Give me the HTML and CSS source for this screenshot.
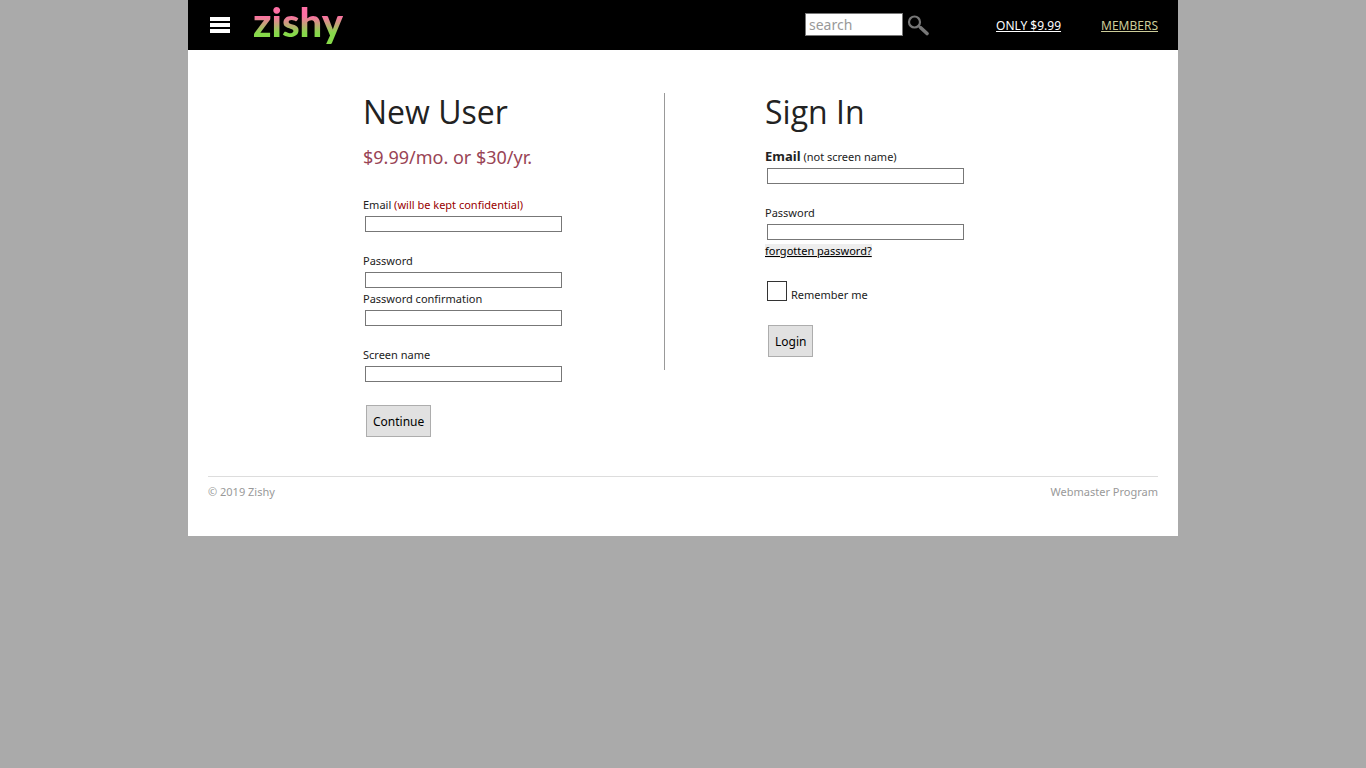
FILE: index.html
```html
<!DOCTYPE html>
<html lang="en">
<head>
<meta charset="utf-8">
<meta name="viewport" content="width=device-width, initial-scale=1">
<title>Zishy</title>
<link rel="stylesheet" href="styles.css">
</head>
<body>
<div class="page">
  <header class="topbar">
    <button class="menu" type="button" aria-label="Menu"><span></span><span></span><span></span></button>
    <a class="logo" href="#">zishy</a>
    <form class="search" role="search">
      <input class="search-box" type="text" placeholder="search" aria-label="Search">
      <button class="search-go" type="submit" aria-label="Go">
        <svg width="24" height="22" viewBox="0 0 24 22" fill="none" stroke="#777">
          <circle cx="7.500" cy="8" r="5.500" stroke-width="2.200"/>
          <path d="M11.500 12L14 14" stroke-width="2.500"/>
          <path d="M14 14L20 19.500" stroke-width="3.600" stroke-linecap="round"/>
        </svg>
      </button>
    </form>
    <nav class="links">
      <a class="price-link" href="#">ONLY $9.99</a>
      <a class="members-link" href="#">MEMBERS</a>
    </nav>
  </header>

  <main class="panels">
    <section class="panel">
      <h1>New User</h1>
      <p class="price">$9.99/mo. or $30/yr.</p>
      <form class="form">
        <div class="field">
          <label for="new-email">Email <span class="note">(will be kept confidential)</span></label>
          <input id="new-email" type="text">
        </div>
        <div class="group">
          <div class="field">
            <label for="new-pass">Password</label>
            <input id="new-pass" type="password">
          </div>
          <div class="field">
            <label for="new-confirm">Password confirmation</label>
            <input id="new-confirm" type="password">
          </div>
        </div>
        <div class="field">
          <label for="screen-name">Screen name</label>
          <input id="screen-name" type="text">
        </div>
        <button class="submit" type="submit">Continue</button>
      </form>
    </section>
    <section class="panel">
      <h1>Sign In</h1>
      <form class="form signin">
        <div class="field">
          <label for="email"><strong>Email</strong> (not screen name)</label>
          <input id="email" type="text">
        </div>
        <div class="field">
          <label for="pass">Password</label>
          <input id="pass" type="password">
          <a class="forgot" href="#">forgotten password?</a>
        </div>
        <div class="remember">
          <input id="remember" type="checkbox">
          <label for="remember">Remember me</label>
        </div>
        <button class="submit" type="submit">Login</button>
      </form>
    </section>
  </main>

  <footer class="footer">
    <span>© 2019 Zishy</span>
    <a href="#">Webmaster Program</a>
  </footer>
</div>
</body>
</html>
```
FILE: styles.css
```css
* { box-sizing: border-box; }
body {
  margin: 0;
  background: #aaa;
  color: #222;
  font: 11px/18px "Noto Sans", "Open Sans", sans-serif;
}
button, input { font-family: inherit; margin: 0; border-radius: 0; }
.page { max-width: 990px; margin: 0 auto; background: #fff; padding-bottom: 35px; }

.topbar {
  display: flex;
  align-items: center;
  height: 50px;
  padding: 0 20px;
  background: #000;
}
.menu {
  display: flex;
  flex-direction: column;
  gap: 2px;
  width: 24px;
  padding: 0 2px;
  border: 0;
  background: none;
}
.menu span { height: 4px; background: #fff; }
.logo {
  margin-left: 21px;
  padding-bottom: 6px;
  font: 900 40px/44px Lato, "Noto Sans", sans-serif;
  text-decoration: none;
  color: transparent;
  background: linear-gradient(#ff6fa5 32%, #86d94a 66%);
  background-clip: text;
}
.search { display: flex; align-items: center; gap: 4px; margin-left: auto; padding-bottom: 1px; }
.search-box {
  width: 98px;
  height: 23px;
  padding: 0 3px;
  border: 1px solid #777;
  background: #fff;
  font-size: 14px;
}
.search-box::placeholder { color: #999; }
.search-go { display: flex; padding: 0; border: 0; background: none; }
.links { display: flex; gap: 40px; margin-left: 65px; padding-top: 2px; font-size: 12px; }
.price-link { color: #fff; }
.members-link { color: #cc9; }

.panels {
  display: grid;
  grid-template-columns: 302px 1fr;
  align-items: start;
  padding: 43px 20px 36px 175px;
}
.panel + .panel { padding-left: 100px; }
.panel:first-child { position: relative; }
.panel:first-child::after {
  content: "";
  position: absolute;
  top: 0;
  right: 0;
  width: 1px;
  height: 277px;
  background: #999;
}
h1 { margin: 0; font: 400 32px/38px "Open Sans", "Noto Sans", sans-serif; }
.price { margin: 14px 0 27px; font-size: 18px; line-height: 24px; color: #945; }
.form { display: flex; flex-direction: column; align-items: flex-start; gap: 18px; }
.signin { margin-top: 16px; }
.field { display: flex; flex-direction: column; align-items: flex-start; }
.field input {
  width: 197px;
  height: 16px;
  margin: 2px;
  padding: 0 2px;
  border: 1px solid #777;
  background: #fff;
}
.field strong { font-size: 13px; }
.note { color: #900; }
.forgot { color: #000; background: #eee; line-height: 14px; margin: 2px 0; }
.remember { display: flex; align-items: flex-end; gap: 4px; padding: 3px 2px; }
.remember input {
  appearance: none;
  width: 20px;
  height: 20px;
  border: 1px solid #333;
  background: #fff;
}
.remember label { line-height: 12px; }
.submit {
  height: 32px;
  margin: 3px;
  padding: 0 6px;
  border: 1px solid #adadad;
  background: #e1e1e1;
  color: #000;
  font-size: 12px;
}
.footer {
  display: flex;
  justify-content: space-between;
  margin: 0 20px;
  padding-top: 6px;
  border-top: 1px solid #ddd;
  color: #999;
}
.footer a { color: inherit; text-decoration: none; }
```
